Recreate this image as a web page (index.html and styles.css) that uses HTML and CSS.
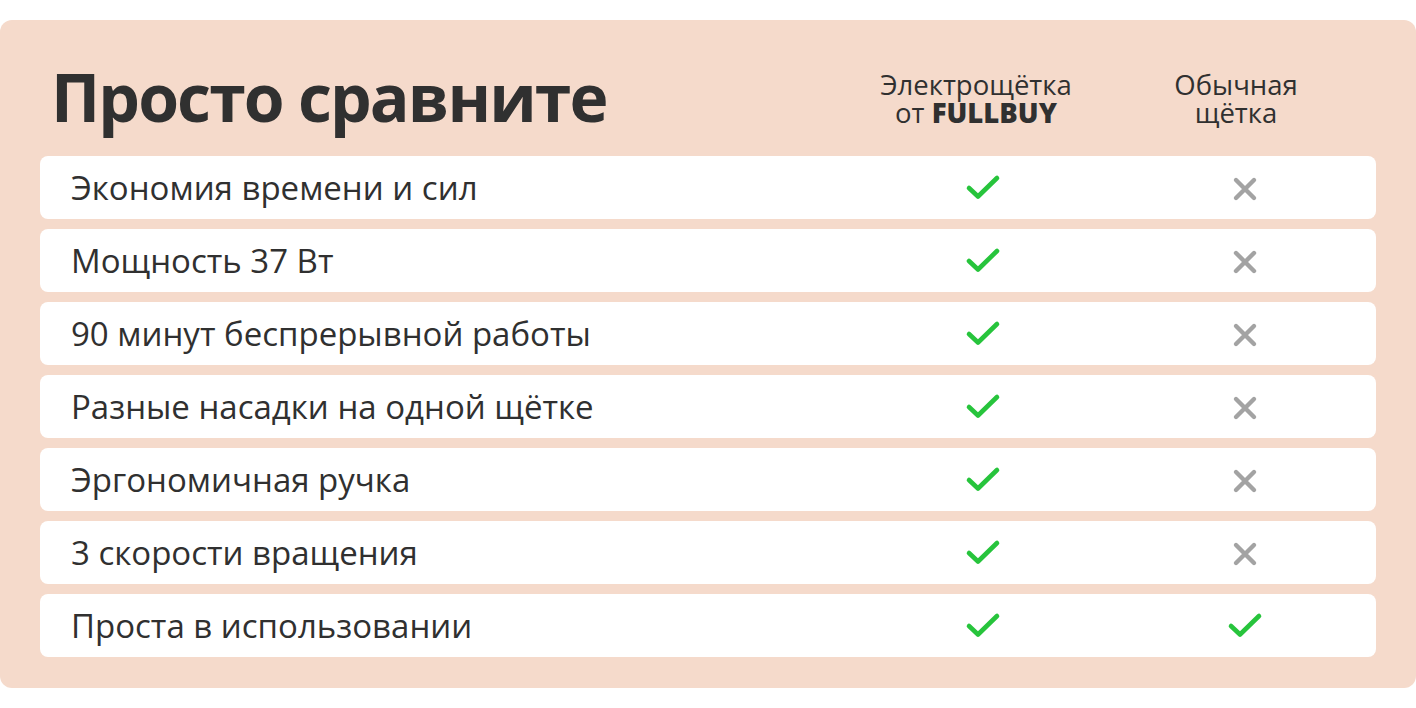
FILE: index.html
```html
<!DOCTYPE html>
<html lang="ru">
<head>
<meta charset="utf-8">
<link rel="stylesheet" href="styles.css">
</head>
<body>
<div class="card">
  <div class="head">
    <h1 class="title">Просто сравните</h1>
    <div class="col-h col-a">Электрощётка<br>от <b>FULLBUY</b></div>
    <div class="col-h col-b">Обычная<br>щётка</div>
  </div>
  <div class="rows">
    <div class="row"><span class="label">Экономия времени и сил</span><span class="cell a"><svg class="ico chk"><use href="#chk"/></svg></span><span class="cell b"><svg class="ico crs"><use href="#crs"/></svg></span></div>
    <div class="row"><span class="label">Мощность 37 Вт</span><span class="cell a"><svg class="ico chk"><use href="#chk"/></svg></span><span class="cell b"><svg class="ico crs"><use href="#crs"/></svg></span></div>
    <div class="row"><span class="label">90 минут беспрерывной работы</span><span class="cell a"><svg class="ico chk"><use href="#chk"/></svg></span><span class="cell b"><svg class="ico crs"><use href="#crs"/></svg></span></div>
    <div class="row"><span class="label">Разные насадки на одной щётке</span><span class="cell a"><svg class="ico chk"><use href="#chk"/></svg></span><span class="cell b"><svg class="ico crs"><use href="#crs"/></svg></span></div>
    <div class="row"><span class="label">Эргономичная ручка</span><span class="cell a"><svg class="ico chk"><use href="#chk"/></svg></span><span class="cell b"><svg class="ico crs"><use href="#crs"/></svg></span></div>
    <div class="row"><span class="label">3 скорости вращения</span><span class="cell a"><svg class="ico chk"><use href="#chk"/></svg></span><span class="cell b"><svg class="ico crs"><use href="#crs"/></svg></span></div>
    <div class="row"><span class="label">Проста в использовании</span><span class="cell a"><svg class="ico chk"><use href="#chk"/></svg></span><span class="cell b"><svg class="ico chk"><use href="#chk"/></svg></span></div>
  </div>
</div>
<svg width="0" height="0" class="defs">
  <symbol id="chk" viewBox="0 0 40 40">
    <path d="M6 21 L15 29.5 L34 11" fill="none" stroke="#27c43c" stroke-width="4.6" stroke-linecap="round" stroke-linejoin="round"/>
  </symbol>
  <symbol id="crs" viewBox="0 0 40 40">
    <path d="M11 11 L29 29 M29 11 L11 29" fill="none" stroke="#a3a3a3" stroke-width="4.4" stroke-linecap="round"/>
  </symbol>
</svg>
</body>
</html>
```
FILE: styles.css
```css
html, body {
  margin: 0;
  padding: 0;
  background: #ffffff;
}
body {
  font-family: "Open Sans", "Noto Sans", sans-serif;
  color: #303030;
  padding-top: 20px;
  width: 1416px;
  height: 708px;
  box-sizing: border-box;
}
.card {
  width: 1416px;
  height: 668px;
  box-sizing: border-box;
  background: #f5dacb;
  border-radius: 12px;
  padding: 0 40px;
}
.head {
  display: flex;
  align-items: flex-start;
  height: 136px;
}
.title {
  margin: 43px 0 0 11px;
  font-size: 66px;
  font-weight: 700;
  letter-spacing: -1.9px;
  flex: 1;
  line-height: 66px;
}
.col-h {
  margin-top: 51px;
  font-size: 27.5px;
  line-height: 28px;
  text-align: center;
}
.col-h b { font-weight: 800; }
.col-a { width: 260px; }
.col-b { width: 260px; margin-right: 10px; }
.rows {
  display: flex;
  flex-direction: column;
  gap: 10px;
}
.row {
  display: flex;
  align-items: center;
  height: 63px;
  background: #ffffff;
  border-radius: 8px;
}
.label {
  flex: 1;
  font-size: 33px;
  padding-left: 31px;
}
.cell {
  width: 262px;
  display: flex;
  justify-content: center;
}
.ico {
  width: 40px;
  height: 40px;
  display: block;
}
.ico.chk { margin-bottom: 1px; }
.ico.crs { margin-top: 3px; }
.defs { position: absolute; }
```
